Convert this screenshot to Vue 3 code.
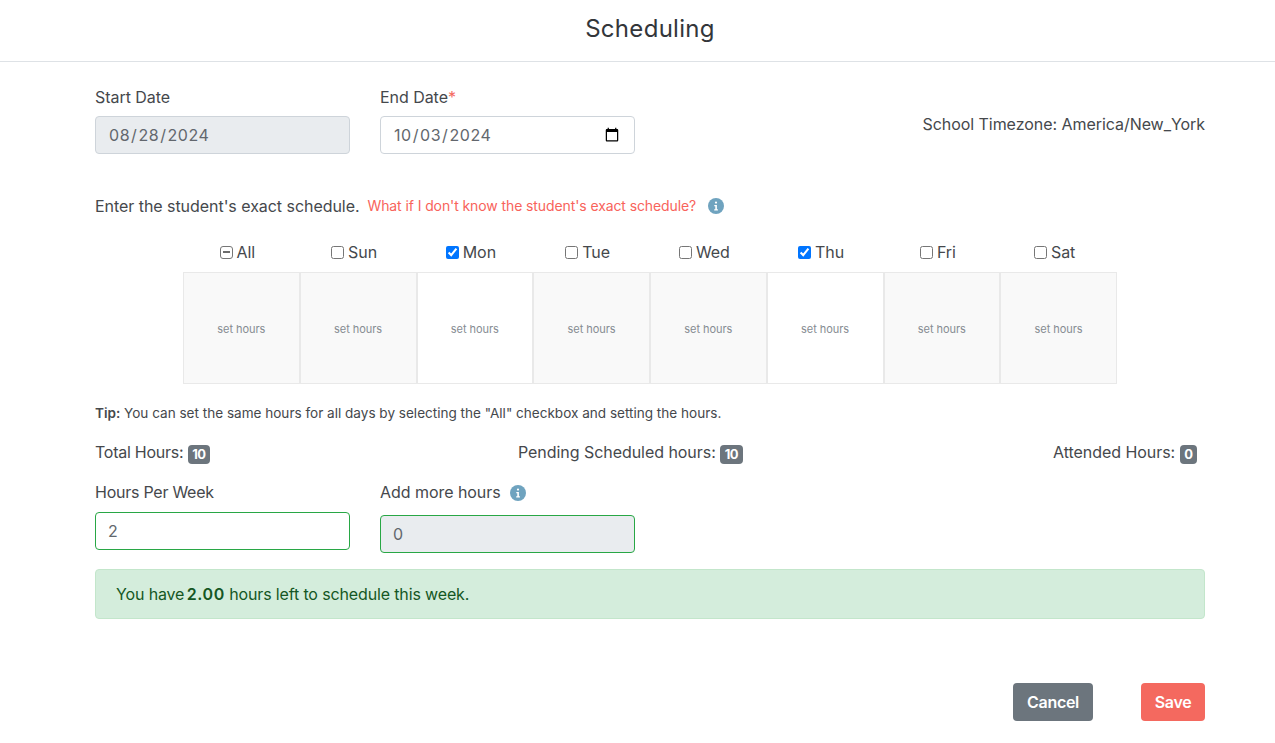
<script setup>
import { ref, onMounted } from 'vue'
const days = [
  { name: 'All', white: false },
  { name: 'Sun', white: false },
  { name: 'Mon', white: true, checked: true },
  { name: 'Tue', white: false },
  { name: 'Wed', white: false },
  { name: 'Thu', white: true, checked: true },
  { name: 'Fri', white: false },
  { name: 'Sat', white: false },
]
const allBox = ref([])
onMounted(() => {
  if (allBox.value[0]) allBox.value[0].indeterminate = true
})
</script>

<template>
  <div class="modal">
    <header class="head"><h1>Scheduling</h1></header>
    <main class="content">
      <section class="dates">
        <div class="field">
          <label>Start Date</label>
          <input class="ctl start" type="date" value="2024-08-28" disabled />
        </div>
        <div class="field">
          <label>End Date<span class="req">*</span></label>
          <input class="ctl" type="date" value="2024-10-03" />
        </div>
        <p class="tz">School Timezone: America/New_York</p>
      </section>

      <p class="intro">
        <span>Enter the student's exact schedule.</span>
        <a class="link">What if I don't know the student's exact schedule?</a>
        <svg class="info" viewBox="0 0 16 16"><circle cx="8" cy="8" r="8" fill="#6fa3bf"/><circle cx="8" cy="4.6" r="1.1" fill="#fff"/><path d="M6.3 7h2.6v4.2h1v1.2H6.2v-1.2h1.1V8.2h-1z" fill="#fff"/></svg>
      </p>

      <section class="week">
        <div v-for="d in days" :key="d.name" class="day">
          <label class="check">
            <input v-if="d.name === 'All'" ref="allBox" class="mixed" type="checkbox" />
            <input v-else type="checkbox" :checked="d.checked" />
            <span>{{ d.name }}</span>
          </label>
          <div class="cell" :class="{ white: d.white }">set hours</div>
        </div>
      </section>

      <p class="tip"><b>Tip:</b> You can set the same hours for all days by selecting the "All" checkbox and setting the hours.</p>

      <section class="totals">
        <div class="tight">Total Hours: <span class="badge">10</span></div>
        <div>Pending Scheduled hours: <span class="badge">10</span></div>
        <div>Attended Hours: <span class="badge">0</span></div>
      </section>

      <section class="hours">
        <div class="field">
          <label class="tight">Hours Per Week</label>
          <input class="ctl ok" type="text" value="2" />
        </div>
        <div class="field">
          <label class="with-info">Add more hours
            <svg class="info" viewBox="0 0 16 16"><circle cx="8" cy="8" r="8" fill="#6fa3bf"/><circle cx="8" cy="4.6" r="1.1" fill="#fff"/><path d="M6.3 7h2.6v4.2h1v1.2H6.2v-1.2h1.1V8.2h-1z" fill="#fff"/></svg>
          </label>
          <input class="ctl ok lower" type="text" value="0" disabled />
        </div>
      </section>

      <div class="alert">You have <b>2.00</b> hours left to schedule this week.</div>

      <footer class="actions">
        <button class="btn cancel">Cancel</button>
        <button class="btn save">Save</button>
      </footer>
    </main>
  </div>
</template>

<style>
html, body { margin: 0; overflow: hidden; background: #fff; }
</style>

<style scoped>
.modal {
  width: 1275px;
  height: 743px;
  overflow: hidden;
  font-family: Inter, "Liberation Sans", sans-serif;
  font-size: 16px;
  letter-spacing: -0.05px;
  color: #45484c;
}
.head { height: 61px; border-bottom: 1px solid #dee2e6; width: 1275px; }
.head h1 {
  width: 1300px;
  margin: 0;
  text-align: center;
  font-size: 24px;
  line-height: 57px;
  font-weight: 400;
  letter-spacing: 0.3px;
  color: #33363a;
}
.content { width: 1110px; padding-left: 95px; }
.dates, .hours { display: flex; gap: 30px; }
.dates { padding-top: 23px; position: relative; }
.field { width: 255px; display: flex; flex-direction: column; }
.field > label { line-height: 24px; height: 24px; margin-bottom: 7px; }
.req { color: #f4695f; }
.ctl {
  box-sizing: border-box;
  width: 255px;
  height: 38px;
  padding: 6px 12px;
  font: inherit;
  letter-spacing: 0.55px;
  color: #62676d;
  background: #fff;
  border: 1px solid #ced4da;
  border-radius: 4px;
  outline: none;
}
.ctl:disabled { background: #e9ecef; opacity: 1; }
.start::-webkit-calendar-picker-indicator { display: none; }
.tz { margin: 27px 0 0 auto; line-height: 24px; }
.intro { margin: 0; padding-top: 40px; height: 24px; line-height: 24px; display: flex; align-items: center; }
.link { color: #f8635b; font-size: 14px; margin-left: 8px; letter-spacing: -0.1px; }
.info { width: 16px; height: 16px; margin-left: 12px; flex: none; }
.week { display: flex; width: 934px; margin: 20px 0 0 88px; }
.day { flex: 1; min-width: 0; display: flex; flex-direction: column; }
.check { height: 34px; display: flex; align-items: center; justify-content: center; gap: 4px; padding: 0 8px 6px 0; box-sizing: border-box; }
.check input { width: 13px; height: 13px; margin: 0; }
.check .mixed {
  appearance: none;
  box-sizing: border-box;
  background: #fff;
  border: 1px solid #767676;
  border-radius: 3px;
  position: relative;
}
.check .mixed::after {
  content: "";
  position: absolute;
  left: 2px;
  right: 2px;
  top: 4px;
  height: 2px;
  background: #6c6c6c;
}
.cell {
  height: 112px;
  box-sizing: border-box;
  padding-top: 2px;
  display: flex;
  align-items: center;
  justify-content: center;
  background: #f9f9f9;
  border: 1px solid #e9e9e9;
  font-size: 11px;
  letter-spacing: -0.05px;
  color: #868c92;
}
.cell.white { background: #fff; }
.tip { margin: 20px 0 0; font-size: 13.55px; line-height: 18px; letter-spacing: 0; }
.tip b { font-weight: 600; }
.totals {
  display: grid;
  grid-template-columns: 423px 1fr auto;
  padding-right: 8px;
  margin-top: 18px;
  line-height: 24px;
}
.tight { letter-spacing: -0.25px; }
.badge {
  display: inline-block;
  min-width: 8px;
  padding: 3px 4.5px;
  background: #6c757d;
  color: #fff;
  font-size: 13px;
  line-height: 13px;
  font-weight: 700;
  letter-spacing: -0.4px;
  border-radius: 4px;
  text-align: center;
  vertical-align: -1px;
}
.hours { margin-top: 16px; }
.hours .field > label { margin-bottom: 8px; }
.with-info { display: flex; align-items: center; }
.with-info .info { margin-left: 9px; margin-top: 2px; }
.ok { border-color: #28a745; }
.lower { margin-top: 3px; }
.alert {
  box-sizing: border-box;
  height: 50px;
  margin-top: 16px;
  padding: 0 20px;
  line-height: 48px;
  background: #d4eddc;
  border: 1px solid #c3e6cb;
  border-radius: 4px;
  color: #155724;
  letter-spacing: -0.14px;
}
.alert b { font-weight: 600; margin-left: -2px; letter-spacing: 0.6px; }
.actions { display: flex; justify-content: flex-end; gap: 48px; margin-top: 64px; }
.btn {
  height: 38px;
  border: 0;
  border-radius: 4px;
  color: #fff;
  font: inherit;
  font-weight: 600;
  letter-spacing: -0.3px;
  padding: 0;
}
.cancel { width: 80px; background: #6c757d; }
.save { width: 64px; background: #f4695f; }
</style>
